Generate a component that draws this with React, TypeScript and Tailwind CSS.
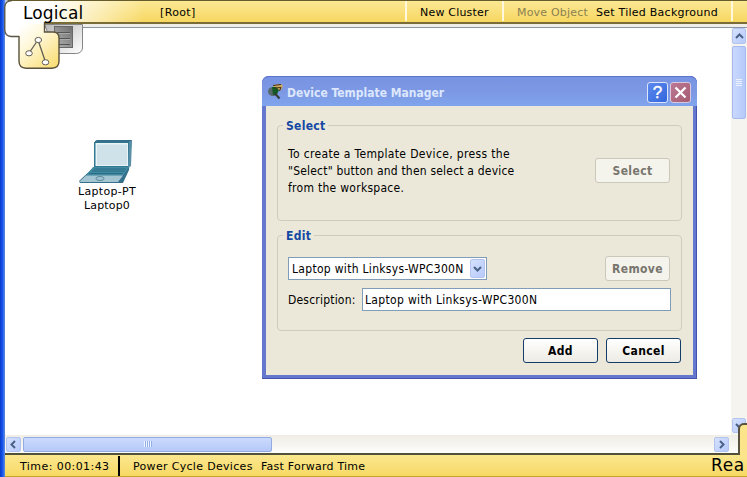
import type { ReactNode } from 'react';

const VERDANA = "font-['DejaVu_Sans',sans-serif]";
const TAHOMA = "font-['DejaVu_Sans_Condensed','DejaVu_Sans',sans-serif]";

function Label({ children, className }: { children: ReactNode; className: string }) {
  return <span className={`block whitespace-pre ${className}`}>{children}</span>;
}

function LogicalTab() {
  return (
    <div className="absolute left-0 top-0 z-10 h-[70px] w-[150px]">
      <svg className="absolute inset-0" width="150" height="70" viewBox="0 0 150 70">
        <defs>
          <linearGradient id="tab" gradientUnits="userSpaceOnUse" x1="5" x2="145" y1="0" y2="0">
            <stop offset="0" stopColor="#fff" />
            <stop offset=".3" stopColor="#fff" />
            <stop offset="1" stopColor="#fff" stopOpacity="0" />
          </linearGradient>
          <linearGradient id="gray" x1="0" x2="1" y1="0" y2="1">
            <stop offset="0" stopColor="#b9b9b9" />
            <stop offset="1" stopColor="#fff" />
          </linearGradient>
          <linearGradient id="rack" x1="0" x2="1" y1="1" y2="0">
            <stop offset="0" stopColor="#b5b5b5" />
            <stop offset="1" stopColor="#6e6e6e" />
          </linearGradient>
          <linearGradient id="node" x1=".1" x2=".9" y1="0" y2="1">
            <stop offset="0" stopColor="#fff" />
            <stop offset=".35" stopColor="#fff8da" />
            <stop offset="1" stopColor="#f9dd72" />
          </linearGradient>
        </defs>
        <path d="M44.500 24.500H82.500V48Q82 53 76.500 53.500H56Z" fill="url(#gray)" stroke="#858585" />
        <rect x="54.500" y="26.500" width="18" height="21" fill="url(#rack)" stroke="#686868" />
        <path d="M57 32.500h13M57 38.500h13M57 44.500h13" stroke="#555" />
        <path d="M57 33.500h13M57 39.500h13" stroke="#aaa" />
        <path d="M5 0H9Q5 1 5 6Z" fill="#b9c6e8" />
        <path d="M5 7Q5 1 11 1H145V22H44V37H11Q5 36 5 31Z" fill="url(#tab)" />
        <path d="M12 .700Q5 1 4.800 7V30Q5 36 11 36.500H19" fill="none" stroke="#5b5544" strokeWidth="1.300" />
        <path d="M19 36V24H44.500V32H53Q59 32 59 38V61Q59 68 52 68.300H26Q19 68 19 61Z" fill="url(#node)" />
        <path d="M19 36V61Q19 68 26 68.300H52Q59 68 59 61V38Q59 32 53 32H44.500V22" fill="none" stroke="#5a523c" strokeWidth="1.400" />
        <path d="M38 40L29 53M38 40L45.500 62" stroke="#625e52" strokeWidth="1.300" fill="none" />
        <ellipse cx="38.300" cy="40" rx="3.300" ry="2.600" fill="#fff" stroke="#625e52" />
        <ellipse cx="29" cy="53.300" rx="3.300" ry="2.600" fill="#fff" stroke="#625e52" />
        <ellipse cx="45.500" cy="62.300" rx="3.300" ry="2.600" fill="#fff" stroke="#625e52" />
      </svg>
      <Label className={`${VERDANA} absolute left-[23px] top-[2px] text-[17px] leading-[22px] tracking-[0.1px]`}>Logical</Label>
    </div>
  );
}

function Toolbar() {
  const text = `${VERDANA} absolute top-[5px] text-[11px] leading-[16px]`;
  return (
    <header className="relative h-[28px] shrink-0">
      <div className="flex h-[24px] border-b-2 border-t border-b-[#786c37] border-t-[#665c2c] bg-linear-to-b from-[#fbe893] to-[#f7d75f]" />
      <div className="h-[3px] bg-[#efeee8]" />
      <div className="h-px bg-[#8796a2]" />
      <Label className={`${text} left-[155px] tracking-[0.35px]`}>[Root]</Label>
      <i className="absolute left-[400px] top-[1px] h-[20px] w-[2px] bg-[#fff8dc]" />
      <Label className={`${text} left-[415px] tracking-[0.2px]`}>New Cluster</Label>
      <i className="absolute left-[497px] top-[1px] h-[20px] w-[2px] bg-[#fff8dc]" />
      <Label className={`${text} left-[512px] tracking-[0.2px] text-[#8b8150]`}>Move Object</Label>
      <Label className={`${text} left-[591px] tracking-[0.25px]`}>Set Tiled Background</Label>
      <i className="absolute left-[726px] top-[1px] h-[20px] w-[2px] bg-[#fff8dc]" />
    </header>
  );
}

function Arrow({ d }: { d: string }) {
  return (
    <svg width="9" height="9" viewBox="0 0 9 9">
      <path d={d} fill="none" stroke="#4a6287" strokeWidth="2" />
    </svg>
  );
}

const scrollButton =
  'flex shrink-0 items-center justify-center rounded-[2px] border border-[#b3c5ee] bg-linear-to-br from-[#d5e0fd] to-[#b7cbfa]';

function Laptop() {
  return (
    <div className={`${VERDANA} absolute left-[66px] top-[110px] flex w-[72px] flex-col items-center text-[11px] leading-[14px]`}>
      <svg className="mr-[7px]" width="58" height="47" viewBox="0 0 58 47">
        <path d="M20 3L22 2H57L54 32L48 45H5L4 43L19 29Z" fill="#347089" />
        <path d="M19 4H54V29H19Z" fill="#327790" />
        <path d="M20.500 5H53V28H20.500Z" fill="#eaf3f6" />
        <path d="M22 6.500H52V27H22Z" fill="#cfe2ea" />
        <path d="M54 4L57 2L56 28L53 30Z" fill="#588fa7" />
        <path d="M18 29H54L48 37.500H11Z" fill="#438ba3" />
        <path d="M19 31H51M17 33H50M14 35.500H48" stroke="#286b84" />
        <path d="M11 37.500H48L43 44H4Z" fill="#a3c5d2" />
        <ellipse cx="25" cy="40.500" rx="4" ry="2" fill="none" stroke="#5b899c" />
      </svg>
      <Label className="tracking-[0.3px]">Laptop-PT</Label>
      <Label className="tracking-[0.15px]">Laptop0</Label>
    </div>
  );
}

function DialogButton({ children, className, disabled }: { children: string; className: string; disabled?: boolean }) {
  const tone = disabled
    ? 'border-[#cbc8ba] bg-[#f4f3ec] text-[#77756d]'
    : 'border-[#143d69] bg-linear-to-b from-white to-[#ecebe4] text-black';
  return (
    <button
      disabled={disabled}
      className={`${TAHOMA} flex h-[25px] items-center justify-center whitespace-pre rounded-[3px] border text-[12px] font-bold leading-[14px] tracking-[0.4px] ${tone} ${className}`}
    >
      {children}
    </button>
  );
}

function Group({ title, className, children }: { title: string; className: string; children: ReactNode }) {
  return (
    <section className={`relative w-[405px] rounded-[4px] border border-[#cfccbb] ${className}`}>
      <h2 className="absolute left-[5px] top-[-8px] whitespace-pre bg-[#ebe8d9] px-[3px] text-[12px] font-bold leading-[16px] tracking-[0.3px] text-[#1448a4]">
        {title}
      </h2>
      {children}
    </section>
  );
}

function Dialog() {
  return (
    <div
      className={`${TAHOMA} absolute left-[257px] top-[48px] flex h-[303px] w-[435px] flex-col rounded-t-[7px] bg-[#6578cd] text-[12px] shadow-[inset_-1px_-1px_0_#4453aa,inset_1px_1px_0_#6278d0]`}
    >
      <div className="flex h-[30px] shrink-0 items-center rounded-t-[7px] border-t border-[#5c76d0] bg-linear-to-b from-[#7893e2] via-[#7d98e3] to-[#7fa4ed] pl-[5px] pr-[6px] pt-[2px]">
        <svg className="mb-[2px]" width="18" height="18" viewBox="0 0 18 18">
          <ellipse cx="6" cy="8.500" rx="5" ry="4.500" fill="#56696c" />
          <path d="M6 2L14 1L16 3L14 7L7 8Z" fill="#cfa960" />
          <path d="M5 4L9 4L12 7L10 11L6 12Z" fill="#155a25" />
          <path d="M6 2.500L14 1.500M8 5L14 4.500L12.500 8" stroke="#40301a" fill="none" />
          <path d="M8 10.500L12.500 15.500" stroke="#333a35" strokeWidth="2" />
        </svg>
        <Label className="ml-[2px] text-[12px] font-bold leading-[16px] text-[#dce7fc]">Device Template Manager</Label>
        <span className="ml-auto flex size-[21px] items-center justify-center rounded-[3px] border border-[#dde5fa] bg-linear-to-br from-[#5c89ee] to-[#3266dc] font-['Liberation_Sans',sans-serif] text-[17px] leading-none text-white [-webkit-text-stroke:0.4px_white]">
          ?
        </span>
        <span className="ml-[2px] flex size-[21px] items-center justify-center rounded-[3px] border border-[#dac7df] bg-linear-to-br from-[#bb7994] to-[#a65c72]">
          <svg width="13" height="13" viewBox="0 0 13 13">
            <path d="M1.500 1.500L11.500 11.500M11.500 1.500L1.500 11.500" stroke="#fff" strokeWidth="2.300" />
          </svg>
        </span>
      </div>
      <div className="mx-[4px] mb-[4px] flex flex-1 flex-col bg-[#ebe8d9] pl-[11px] pt-[19px]">
        <Group title="Select" className="flex h-[96px] items-center justify-between pl-[10px] pr-[11px]">
          <div className="mb-[4px] leading-[17px]">
            <Label className="tracking-[0.35px]">To create a Template Device, press the</Label>
            <Label className="tracking-[0.2px]">"Select" button and then select a device</Label>
            <Label className="tracking-[0.28px]">from the workspace.</Label>
          </div>
          <DialogButton disabled className="mb-[5px] w-[75px]">Select</DialogButton>
        </Group>
        <Group title="Edit" className="mt-[14px] h-[96px] pl-[10px] pr-[10px] pt-[20px]">
          <div className="flex h-[25px] items-center justify-between pr-px">
            <div className="flex h-[23px] w-[199px] items-center border border-[#7f9db9] bg-white pl-[3px] pr-px">
              <Label className="tracking-[0.3px]">Laptop with Linksys-WPC300N</Label>
              <span className={`ml-auto h-[19px] w-[15px] ${scrollButton}`}>
                <Arrow d="M1 3L4.500 6.500L8 3" />
              </span>
            </div>
            <DialogButton disabled className="w-[65px]">Remove</DialogButton>
          </div>
          <div className="mt-[7px] flex items-center">
            <Label className="w-[74px] tracking-[0.2px]">Description:</Label>
            <div className="flex h-[23px] flex-1 items-center border border-[#7f9db9] bg-white pl-[2px]">
              <Label className="tracking-[0.33px]">Laptop with Linksys-WPC300N</Label>
            </div>
          </div>
        </Group>
        <div className="mt-[7px] flex justify-end gap-[8px] pr-[12px]">
          <DialogButton className="w-[75px]">Add</DialogButton>
          <DialogButton className="w-[75px]">Cancel</DialogButton>
        </div>
      </div>
    </div>
  );
}

export default function App() {
  return (
    <div className="relative flex h-[477px] w-[747px] overflow-hidden bg-white text-black">
      <div className="w-[5px] shrink-0 bg-linear-to-r from-[#0739c9] via-[#1755ed] to-[#5f8be0]" />
      <LogicalTab />
      <div className="flex min-w-0 flex-1 flex-col">
        <Toolbar />
        <div className="flex h-[407px] shrink-0">
          <main className="relative w-[726px] shrink-0 bg-white">
            <Laptop />
            <Dialog />
          </main>
          <div className="flex w-[16px] flex-col bg-[#f5f4ee] pl-px">
            <div className={`h-[16px] w-[14px] ${scrollButton}`}>
              <Arrow d="M1 6L4.500 2.500L8 6" />
            </div>
            <div className="mt-[2px] flex h-[73px] w-[14px] flex-col items-center justify-center gap-px rounded-[2px] border border-[#a6baf0] bg-linear-to-r from-[#cad8fe] to-[#b5caf9]">
              {[0, 1, 2, 3].map((n) => (
                <i key={n} className="h-px w-[6px] bg-[#edf4ff]" />
              ))}
            </div>
            <div className={`mb-[2px] mt-auto h-[15px] w-[14px] ${scrollButton}`}>
              <Arrow d="M1 3L4.500 6.500L8 3" />
            </div>
          </div>
        </div>
        <div className="flex h-[18px] shrink-0 items-center bg-linear-to-b from-[#efede5] to-[#fcfcfa]">
          <div className={`ml-px h-[15px] w-[15px] ${scrollButton}`}>
            <Arrow d="M6 1L2.500 4.500L6 8" />
          </div>
          <div className="ml-[2px] flex h-[15px] w-[249px] items-center justify-center gap-px rounded-[2px] border border-[#93abe2] bg-linear-to-b from-[#ccdafe] to-[#b5c9f8]">
            {[0, 1, 2, 3].map((n) => (
              <i key={n} className="h-[6px] w-px bg-[#edf4ff] shadow-[1px_0_0_#94afe8]" />
            ))}
          </div>
          <div className={`ml-auto mr-[18px] h-[15px] w-[15px] ${scrollButton}`}>
            <Arrow d="M3 1L6.500 4.500L3 8" />
          </div>
        </div>
        <footer className={`${VERDANA} flex flex-1 items-center border-b border-t-2 border-b-[#c6a52c] border-t-[#515038] bg-linear-to-b from-[#fbe78f] to-[#f7d963] text-[11px]`}>
          <Label className="ml-[15px] w-[98px] pt-[3px] tracking-[0.43px]">Time: 00:01:43</Label>
          <i className="h-[20px] w-[2px] bg-black" />
          <Label className="ml-[13px] w-[128px] pt-[3px] tracking-[0.32px]">Power Cycle Devices</Label>
          <Label className="pt-[3px] tracking-[0.24px]">Fast Forward Time</Label>
        </footer>
      </div>
      <div className="absolute left-[738px] top-[423px] h-[31px] w-[15px] rounded-tl-[6px] border-l-2 border-t-2 border-[#5a523c] bg-[#fbe48a]" />
      <div className="absolute left-[740px] top-[450px] h-[8px] w-[7px] bg-[#fbe48a]" />
      <Label className={`${VERDANA} absolute left-[711px] top-[454px] text-[17px] leading-[22px] tracking-[0.6px]`}>Rea</Label>
    </div>
  );
}
